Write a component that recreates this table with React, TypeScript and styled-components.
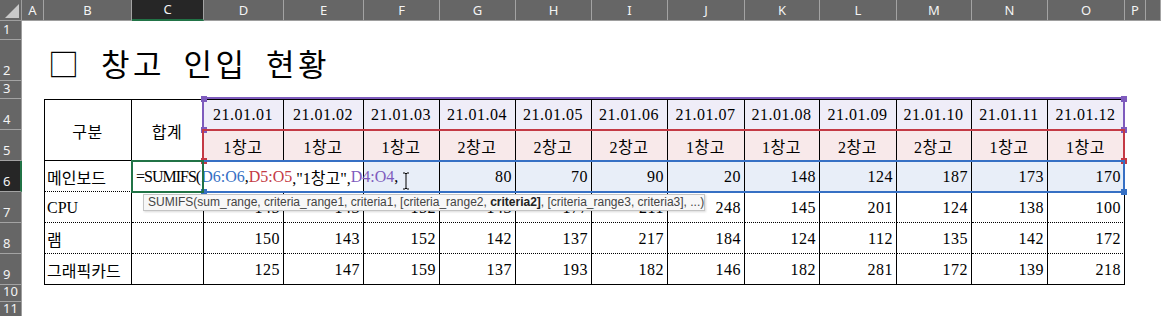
import React from "react";
import styled, { createGlobalStyle } from "styled-components";

const GlobalStyle = createGlobalStyle`
  html, body {
    margin: 0;
    padding: 0;
    background: #ffffff;
  }
  body {
    overflow: hidden;
  }
`;

// sheet column widths: row header, A..P, rest
const Sheet = styled.div`
  position: relative;
  width: 1161px;
  height: 316px;
  display: grid;
  grid-template-columns: 22px 22px 88px 72px 80px 80px 76px 76px 76px 76px 77px 75px 77px 75px 76px 77px 21px 1fr;
  grid-template-rows: 21px 19px 41px 18px repeat(6, 31px) 17px 1fr;
  overflow: hidden;
  font-family: "Liberation Serif", "Noto Sans CJK KR", serif;
`;

const Corner = styled.div`
  background: #666666;
  border-right: 1px solid #9e9e9e;
  border-bottom: 1px solid #9e9e9e;
  box-sizing: border-box;
  display: flex;
  align-items: flex-end;
  justify-content: flex-end;
  padding: 0 2px 2px 0;
`;

const ColHeader = styled.div<{ $active?: boolean }>`
  box-sizing: border-box;
  background: ${(p) => (p.$active ? "#262626" : "#666666")};
  border-right: 1px solid #a3a3a3;
  border-bottom: ${(p) => (p.$active ? "2px solid #217346" : "1px solid #9e9e9e")};
  color: #f4f4f4;
  font-family: "Noto Sans", "Liberation Sans", sans-serif;
  font-size: 13px;
  display: flex;
  align-items: center;
  justify-content: center;
  line-height: 1;
`;

const RowHeader = styled.div<{ $row: number; $active?: boolean }>`
  grid-column: 1;
  grid-row: ${(p) => p.$row};
  box-sizing: border-box;
  background: ${(p) => (p.$active ? "#262626" : "#666666")};
  border-bottom: 1px solid #a3a3a3;
  border-right: ${(p) => (p.$active ? "2px solid #217346" : "1px solid #9e9e9e")};
  color: #f4f4f4;
  font-family: "Noto Sans", "Liberation Sans", sans-serif;
  font-size: 13px;
  line-height: 1;
  display: flex;
  align-items: flex-end;
  padding: 0 0 3px 3px;
`;

const Title = styled.div`
  grid-column: 3 / 13;
  grid-row: 3;
  display: flex;
  align-items: flex-end;
  padding: 0 0 3px 4px;
  font-family: "Noto Sans CJK KR", sans-serif;
  font-size: 31px;
  line-height: 1;
  letter-spacing: 3.5px;
  word-spacing: 8px;
  color: #000;
  white-space: pre;
`;

const Table = styled.div`
  grid-column: 3 / 17;
  grid-row: 5 / 11;
  display: grid;
  grid-template-columns: 87px 72px 80px 80px 76px 76px 76px 76px 77px 75px 77px 75px 76px 77px;
  grid-template-rows: 30px repeat(5, 31px);
  border-top: 1px solid #000;
  border-left: 1px solid #000;
  font-size: 16px;
  color: #000;
`;

type Align = "left" | "center" | "right";

const Cell = styled.div<{ $align?: Align; $line?: "solid" | "dotted"; $fill?: string; $span?: number }>`
  box-sizing: border-box;
  display: flex;
  align-items: center;
  justify-content: ${(p) =>
    p.$align === "right" ? "flex-end" : p.$align === "center" ? "center" : "flex-start"};
  padding: 1px 3px 0 2px;
  border-right: 1px solid #000;
  border-bottom: 1px ${(p) => p.$line ?? "solid"} #000;
  background: ${(p) => p.$fill ?? "transparent"};
  grid-row: ${(p) => (p.$span ? `span ${p.$span}` : "auto")};
  white-space: nowrap;
  overflow: hidden;
  letter-spacing: ${(p) => (p.$align === "left" ? "0" : "0.5px")};
`;

// range highlight frames sit in the sheet grid on top of the table
const RangeBox = styled.div<{ $row: number; $color: string; $top: number }>`
  grid-column: 5 / 17;
  grid-row: ${(p) => p.$row};
  margin: ${(p) => p.$top}px 0 -1px -2px;
  position: relative;
  box-sizing: border-box;
  border: 2px solid ${(p) => p.$color};
  pointer-events: none;
  z-index: 3;
`;

type CornerPos = "tl" | "tr" | "bl" | "br";

const Handle = styled.div<{ $corner: CornerPos; $color: string }>`
  position: absolute;
  ${(p) => (p.$corner[0] === "t" ? "top: -3px;" : "bottom: -4px;")}
  ${(p) => (p.$corner[1] === "l" ? "left: -3px;" : "right: -4px;")}
  width: 6px;
  height: 6px;
  background: ${(p) => p.$color};
`;

const EditBox = styled.div`
  grid-column: 4 / 7;
  grid-row: 7;
  margin: 1px 1px 1px 2px;
  background: #ffffff;
  z-index: 2;
  display: flex;
  align-items: center;
  padding-left: 2px;
  font-size: 16px;
  white-space: nowrap;
  color: #000;
`;

const Fn = styled.span`
  letter-spacing: -1px;
  margin-right: 1px;
`;

const Ref = styled.span<{ $color: string }>`
  color: ${(p) => p.$color};
`;

const Caret = styled.span`
  display: inline-block;
  width: 1px;
  height: 14px;
  margin-left: 3px;
  background: #000;
`;

const Cursor = styled.svg`
  margin: 8px 0 0 1px;
  flex: none;
`;

const ActiveCell = styled.div`
  grid-column: 4;
  grid-row: 7;
  margin: -1px 0 -1px -1px;
  box-sizing: border-box;
  border: 2px solid #217346;
  z-index: 5;
`;

const Tooltip = styled.div`
  position: absolute;
  left: 143px;
  top: 194px;
  width: 562px;
  height: 17px;
  box-sizing: border-box;
  background: #f7f7f7;
  border: 1px solid #c4c4c4;
  box-shadow: 1px 1px 2px rgba(0, 0, 0, 0.15);
  color: #444444;
  font-family: "Liberation Sans", Arial, sans-serif;
  font-size: 12px;
  line-height: 15px;
  padding-left: 4px;
  white-space: nowrap;
  z-index: 6;
  b {
    color: #222222;
  }
`;

const letters = ["A", "B", "C", "D", "E", "F", "G", "H", "I", "J", "K", "L", "M", "N", "O", "P", ""];

const dates = [
  "21.01.01", "21.01.02", "21.01.03", "21.01.04", "21.01.05", "21.01.06",
  "21.01.07", "21.01.08", "21.01.09", "21.01.10", "21.01.11", "21.01.12",
];
const stores = [
  "1창고", "1창고", "1창고", "2창고", "2창고", "2창고",
  "1창고", "1창고", "2창고", "2창고", "1창고", "1창고",
];

// D6:F6 sit under the in-cell editor, so they are left blank
const rows: { name: string; values: (number | null)[]; fill?: string }[] = [
  { name: "메인보드", values: [null, null, null, 80, 70, 90, 20, 148, 124, 187, 173, 170], fill: "#e8eef8" },
  { name: "CPU", values: [145, 143, 152, 143, 177, 211, 248, 145, 201, 124, 138, 100] },
  { name: "램", values: [150, 143, 152, 142, 137, 217, 184, 124, 112, 135, 142, 172] },
  { name: "그래픽카드", values: [125, 147, 159, 137, 193, 182, 146, 182, 281, 172, 139, 218] },
];

const PURPLE = "#7e5bbd";
const RED = "#c43a45";
const BLUE = "#3670c4";

const App: React.FC = () => {
  return (
    <>
      <GlobalStyle />
      <Sheet>
        <Corner>
          <svg width="14" height="14" viewBox="0 0 14 14">
            <polygon points="14,0 14,14 0,14" fill="#c9c9c9" />
          </svg>
        </Corner>
        {letters.map((l, i) => (
          <ColHeader key={i} $active={l === "C"}>
            {l}
          </ColHeader>
        ))}
        {Array.from({ length: 11 }, (_, i) => (
          <RowHeader key={i} $row={i + 2} $active={i + 1 === 6}>
            {i + 1}
          </RowHeader>
        ))}

        <Title>□ 창고 인입 현황</Title>

        <Table>
          <Cell $align="center" $span={2}>구분</Cell>
          <Cell $align="center" $span={2}>합계</Cell>
          {dates.map((d) => (
            <Cell key={d} $align="center" $fill="#efedf8">
              {d}
            </Cell>
          ))}
          {stores.map((s, i) => (
            <Cell key={i} $align="center" $fill="#f8e9ea">
              {s}
            </Cell>
          ))}
          {rows.map((r, ri) => {
            const line = ri === rows.length - 1 ? "solid" : "dotted";
            return (
              <React.Fragment key={r.name}>
                <Cell $align="left" $line={line}>{r.name}</Cell>
                <Cell $align="right" $line={line} />
                {r.values.map((v, vi) => (
                  <Cell key={vi} $align="right" $line={line} $fill={r.fill}>
                    {v}
                  </Cell>
                ))}
              </React.Fragment>
            );
          })}
        </Table>

        <EditBox>
          <Fn>=SUMIFS(</Fn>
          <Ref $color={BLUE}>D6:O6</Ref>,<Ref $color={RED}>D5:O5</Ref>,"1창고",
          <Ref $color={PURPLE}>D4:O4</Ref>,
          <Caret />
          <Cursor width="8" height="18" viewBox="0 0 8 18">
            <path d="M1 1h2l1 1 1-1h2M4 2v14M1 17h2l1-1 1 1h2" stroke="#000" strokeWidth="1" fill="none" />
          </Cursor>
        </EditBox>

        <RangeBox $row={5} $top={-2} $color={PURPLE}>
          <Handle $corner="tl" $color={PURPLE} />
          <Handle $corner="tr" $color={PURPLE} />
          <Handle $corner="bl" $color={PURPLE} />
          <Handle $corner="br" $color={PURPLE} />
        </RangeBox>
        <RangeBox $row={6} $top={-1} $color={RED}>
          <Handle $corner="bl" $color={RED} />
          <Handle $corner="br" $color={RED} />
        </RangeBox>
        <RangeBox $row={7} $top={-1} $color={BLUE}>
          <Handle $corner="bl" $color={BLUE} />
          <Handle $corner="br" $color={BLUE} />
        </RangeBox>

        <ActiveCell />

        <Tooltip>
          SUMIFS(sum_range, criteria_range1, criteria1, [criteria_range2, <b>criteria2]</b>, [criteria_range3,
          criteria3], ...)
        </Tooltip>
      </Sheet>
    </>
  );
};

export default App;
